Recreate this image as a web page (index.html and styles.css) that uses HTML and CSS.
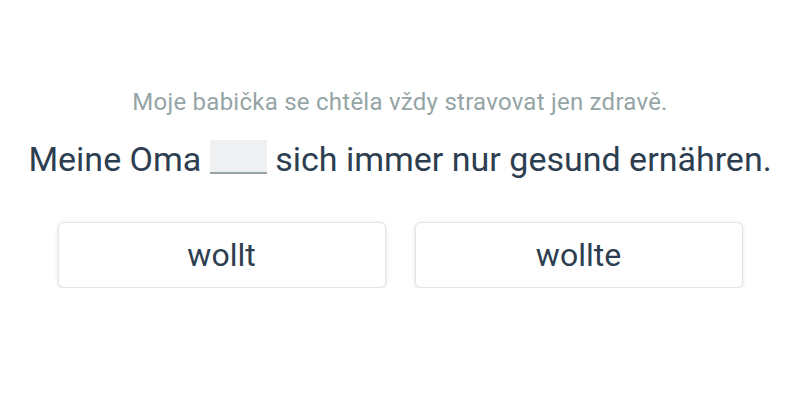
FILE: index.html
```html
<!DOCTYPE html>
<html lang="cs">
<head>
    <meta charset="UTF-8">
    <meta name="viewport" content="width=device-width, initial-scale=1.0">
    <title>Cvičení</title>
    <link rel="stylesheet" href="styles.css">
</head>
<body>
    <div class="exercise">
        <p class="translation">Moje babička se chtěla vždy stravovat jen zdravě.</p>
        <p class="sentence">Meine Oma <span class="blank"></span> sich immer nur gesund ernähren.</p>
        <div class="choices">
            <button class="choice">wollt</button>
            <button class="choice">wollte</button>
        </div>
    </div>
</body>
</html>
```

FILE: styles.css
```css
body {
    margin: 0;
    background: #fff;
    font-family: Roboto, "Liberation Sans", sans-serif;
    color: #2c3e50;
}
.exercise {
    width: 685px;
    margin: 0 auto;
    padding-top: 88px;
    text-align: center;
}
.translation {
    margin: 0 -40px;
    font-size: 24px;
    line-height: 28px;
    letter-spacing: 0.25px;
    color: #95a5a6;
    white-space: nowrap;
}
.sentence {
    margin: 22px -60px 0;
    font-size: 34px;
    line-height: 42px;
    white-space: nowrap;
}
.blank {
    display: inline-block;
    width: 57px;
    height: 32px;
    vertical-align: -3px;
    background: #eef0f2;
    border-bottom: 2px solid #95a5a6;
}
.choices {
    display: grid;
    grid-template-columns: 1fr 1fr;
    gap: 29px;
    margin-top: 42px;
}
.choice {
    height: 66px;
    background: #fff;
    border: 1px solid #e2e4e6;
    border-radius: 6px;
    box-shadow: 0 1px 4px rgba(0, 0, 0, 0.12);
    font-family: inherit;
    font-size: 32px;
    color: #2c3e50;
    cursor: pointer;
}
```
